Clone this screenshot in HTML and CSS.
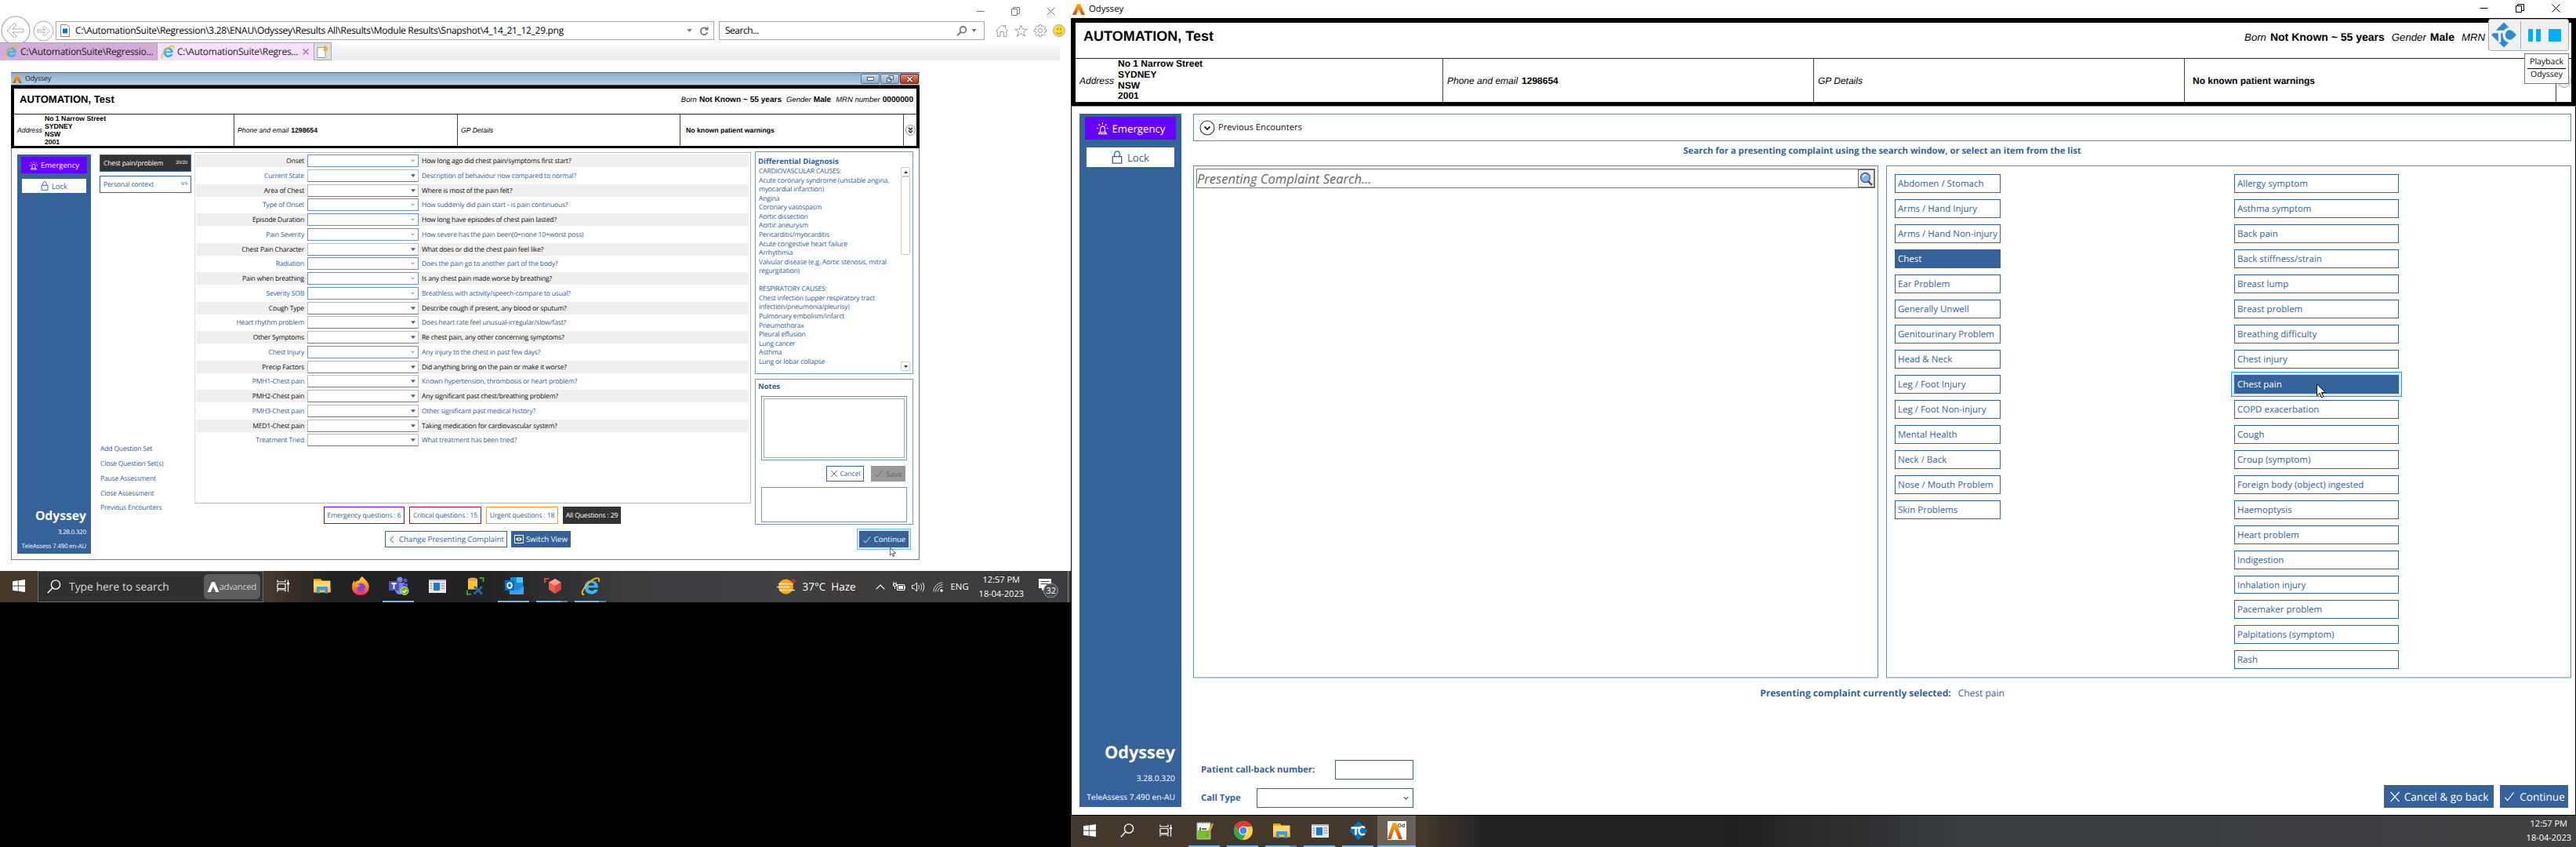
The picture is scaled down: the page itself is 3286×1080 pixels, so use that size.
FILE: index.html
```html
<!DOCTYPE html>
<html lang="en">
<head>
<meta charset="utf-8">
<title>Odyssey</title>
<link rel="stylesheet" href="styles.css">
</head>
<body>
<svg class="defs" aria-hidden="true">
  <defs>
    <linearGradient id="flame" x1="0" y1="0" x2="0" y2="1"><stop offset="0" stop-color="#ffb400"/><stop offset="1" stop-color="#d9480f"/></linearGradient>
    <linearGradient id="fox" x1="0" y1="0" x2="0" y2="1"><stop offset="0" stop-color="#ffde3b"/><stop offset=".5" stop-color="#ff8a1e"/><stop offset="1" stop-color="#f0246c"/></linearGradient>
  </defs>
  <symbol id="i-logo" viewBox="0 0 16 14"><path fill="url(#flame)" d="M6 0h4l6 14h-4.500L8 6.500 4.500 14H0z"/></symbol>
  <symbol id="i-min" viewBox="0 0 11 11"><path d="M.5 5.500h10" stroke="currentColor" fill="none"/></symbol>
  <symbol id="i-restore" viewBox="0 0 11 11"><path d="M.5 2.500h7v8h-7zM2.500 2.500v-2h8v8h-3" stroke="currentColor" fill="none"/></symbol>
  <symbol id="i-close" viewBox="0 0 11 11"><path d="M.5.500l10 10m0-10l-10 10" stroke="currentColor" fill="none"/></symbol>
  <symbol id="i-ie" viewBox="0 0 24 24"><path d="M20.500 14H9c.3 2.500 2 3.600 4 3.600 1.600 0 2.800-.6 3.500-1.600h4.500c-1.200 3.700-4.200 5.500-8 5.500-5 0-8.500-3.400-8.500-8.500S8 4.700 13 4.700s8 3.500 8 8.300zM9.100 11h7.300c-.2-2-1.600-3-3.600-3s-3.400 1-3.700 3z" fill="#3db2ee"/><path d="M4 21.500C.8 24 .5 19 4.500 13.500 9 7 17 1 21 2.200c1.800.6 1.500 2.800.8 4.300" fill="none" stroke="#f3b91c" stroke-width="1.800"/></symbol>
  <symbol id="i-siren" viewBox="0 0 18 18"><path d="M3 16.500h12M4.500 16.500v-2h9v2M6 14.500V9.500a3 3 0 0 1 6 0v5M9 1v3M3.500 3.500l2 2M14.500 3.500l-2 2M1 9h2.500M14.500 9H17" fill="none" stroke="currentColor" stroke-width="1.200"/></symbol>
  <symbol id="i-lock" viewBox="0 0 14 18"><path d="M1 8h12v9H1zM3.500 8V4.500a3.500 3.500 0 0 1 7 0V8" fill="none" stroke="currentColor" stroke-width="1.400"/></symbol>
  <symbol id="i-check" viewBox="0 0 14 14"><path d="M1 8.500l3.500 4L13 1.500" fill="none" stroke="currentColor" stroke-width="1.200"/></symbol>
  <symbol id="i-x" viewBox="0 0 14 14"><path d="M1.500 1l11 12M12.500 1l-11 12" fill="none" stroke="currentColor" stroke-width="1.200"/></symbol>
  <symbol id="i-win" viewBox="0 0 16 16"><path fill="#fff" d="M0 2.300L6.800 1.300v6.300H0zM7.600 1.200L16 0v7.600H7.600zM0 8.400h6.800v6.300L0 13.700zM7.600 8.400H16V16l-8.400-1.200z"/></symbol>
  <symbol id="i-mag" viewBox="0 0 18 18"><path d="M.8 17.200l6-6.500" stroke="currentColor" stroke-width="1.400" fill="none"/><circle cx="11" cy="6.500" r="5.600" stroke="currentColor" stroke-width="1.400" fill="none"/></symbol>
  <symbol id="i-task" viewBox="0 0 17 16"><path d="M1 .5v2.500h10V.5M1 5.500h10v6H1zM1 15.500V13h10v2.500M14.500.5v2.500M14.500 7v8.500" fill="none" stroke="#fff" stroke-width="1.200"/><path fill="#fff" d="M13 3.500h3v3h-3z"/></symbol>
  <symbol id="i-folder" viewBox="0 0 22 19"><path fill="#e39b08" d="M0 0h9l2 3H0z"/><path fill="#ffd869" d="M0 2.500h21.500V17H0z"/><path fill="#f7c23f" d="M0 12h21.500v5.500H0z"/><path fill="#3c99e0" d="M4 10h14v8.500h-3.500v-4h-7v4H4z"/></symbol>
  <symbol id="i-app" viewBox="0 0 22 17"><path fill="#e9e9e9" d="M0 0h22v17H0z"/><path fill="#b9b9b9" d="M0 0h22v2H0z"/><path fill="#1479d0" d="M6 4h8v10H6z"/><path d="M1.500 5h3m-3 3h3m-3 3h3m11-6h5m-5 3h5m-5 3h5" stroke="#888" stroke-width="1"/></symbol>
  <symbol id="i-cursor" viewBox="0 0 12 19"><path d="M.5.700v15l3.600-3.400 2.400 5.600 2.300-1-2.400-5.400h4.900z" fill="#fff" stroke="#000"/></symbol>
  <symbol id="i-tri" viewBox="0 0 8 5"><path fill="currentColor" d="M0 0h8L4 5z"/></symbol>
  <symbol id="i-chev" viewBox="0 0 8 6"><path d="M1 .8l3 3.400L7 .8" fill="none" stroke="currentColor" stroke-width="1.400"/></symbol>
</svg>

<section class="desk desk-left">
  <div class="ie">
    <div class="ie-caption">
      <svg width="11" height="11"><use href="#i-min"/></svg>
      <svg width="11" height="11"><use href="#i-restore"/></svg>
      <svg width="11" height="11"><use href="#i-close"/></svg>
    </div>
    <div class="ie-nav">
      <svg class="back" width="38" height="38" viewBox="0 0 38 38"><circle cx="19" cy="19" r="18" fill="#fff" stroke="#a9a9a9" stroke-width="1.200"/><path d="M8 19l9.500-9.500 2.500 2.500-5 5h14v4H15l5 5-2.500 2.500z" fill="none" stroke="#a9a9a9"/></svg>
      <svg class="fwd" width="27" height="27" viewBox="0 0 27 27"><circle cx="13.500" cy="13.500" r="12.500" fill="#fff" stroke="#a9a9a9"/><path d="M21 13.500L14.500 7l-2 2 3 3H6v3h9.500l-3 3 2 2z" fill="none" stroke="#a9a9a9"/></svg>
      <div class="address">
        <svg width="12" height="16" viewBox="0 0 12 16"><path d="M.5.500h8l3 3v12H.5z" fill="#fff" stroke="#888"/><path d="M3 5.500h6v6H3z" fill="#1273c4"/></svg>
        <span class="url">C:\AutomationSuite\Regression\3.28\ENAU\Odyssey\Results All\Results\Module Results\Snapshot\4_14_21_12_29.png</span>
        <svg class="caret" width="7" height="4"><use href="#i-tri"/></svg>
        <svg width="12" height="13" viewBox="0 0 12 13"><path d="M9.800 4.200A4.400 4.400 0 1 0 10.500 8" fill="none" stroke="#777" stroke-width="1.800"/><path d="M11.500.5v5H6.500z" fill="#777"/></svg>
      </div>
      <div class="search">
        <span>Search...</span>
        <svg width="14" height="13" viewBox="0 0 14 13"><circle cx="8.500" cy="4.900" r="3.900" fill="none" stroke="#777" stroke-width="1.800"/><path d="M5.800 7.700L1 12.400" stroke="#777" stroke-width="2"/></svg>
        <svg class="caret" width="7" height="4"><use href="#i-tri"/></svg>
      </div>
      <div class="ie-tools">
        <svg width="16" height="16" viewBox="0 0 16 16"><path d="M.7 8L8 .8 10.500 3.200V1.500h2v3.700L15.300 8l-1.500.8v6.700h-3.500V9.500H5.800v6H2.200V8.800z" fill="none" stroke="#9a9a9a"/></svg>
        <svg width="17" height="16" viewBox="0 0 17 16"><path d="M8.500.8l2 5.400h5.900l-4.700 3.500 1.800 5.500-5-3.400-5 3.400 1.800-5.500L.6 6.200h5.900z" fill="none" stroke="#9a9a9a"/></svg>
        <svg width="16" height="16" viewBox="0 0 16 16"><circle cx="8" cy="8" r="2.600" fill="none" stroke="#9a9a9a"/><path d="M6.500.7h3v2l1.500.6 1.500-1.300 2 2L13.200 5.500l.5 1.200h1.800v2.800h-1.800L13 11l1.500 1.500-2 2L11 13l-1.500.6v1.800h-3v-1.800L5 13l-1.500 1.500-2-2L3 11l-.6-1.500H.6V6.700h1.800L3 5.500 1.500 4l2-2L5 3.300l1.500-.6z" fill="none" stroke="#9a9a9a"/></svg>
        <svg width="16" height="16" viewBox="0 0 16 16"><circle cx="8" cy="8" r="7.500" fill="#ffd83e" stroke="#aaa"/><path d="M6 4.500v3M10 4.500v3" stroke="#a8841a" stroke-width="1.300"/><path d="M4.500 10.500c2 2 5 2 7 0" fill="none" stroke="#a8841a" stroke-width="1.200"/></svg>
      </div>
    </div>
    <div class="ie-tabs">
      <div class="tab dim"><svg width="18" height="18"><use href="#i-ie"/></svg><span>C:\AutomationSuite\Regressio...</span></div>
      <div class="tab on"><svg width="18" height="18"><use href="#i-ie"/></svg><span>C:\AutomationSuite\Regres...</span><svg class="tab-x" width="8" height="8" viewBox="0 0 8 8"><path d="M.7.700l6.600 6.600M7.300.700L.7 7.300" stroke="#a08fa3" stroke-width="1.700"/></svg></div>
      <div class="newtab"><svg width="15" height="16" viewBox="0 0 15 16"><path d="M1 2.500h10v13H1z" fill="#fff" stroke="#999"/><path d="M11 0l1 2.500 2.500-1L13.500 4l1.500 1-2 .5.500 2.500-2.500-1.500L9 8V5.500L7.500 4.500 9.500 4 9 1.500z" fill="#f2a52c"/></svg></div>
    </div>

    <div class="shot">
      <div class="aero">
        <svg width="12" height="10"><use href="#i-logo"/></svg><span>Odyssey</span>
        <div class="aero-btns">
          <i><svg width="9" height="5" viewBox="0 0 9 5"><path d="M.5.500h8v4h-8z" fill="#fff" stroke="#556"/></svg></i>
          <i><svg width="9" height="9" viewBox="0 0 9 9"><path d="M3 .5h5.500v5H3zM.5 3.500h5v5h-5z" fill="#dde8f2" stroke="#556"/></svg></i>
          <i class="red"><svg width="9" height="8" viewBox="0 0 9 8"><path d="M1 .8l7 6.400M8 .8L1 7.200" stroke="#433" stroke-width="3"/><path d="M1.300 1l6.400 6M7.700 1L1.300 7" stroke="#fff" stroke-width="1.700"/></svg></i>
        </div>
      </div>
      <header class="patient small">
        <div class="p-top">
          <h1>AUTOMATION, Test</h1>
          <p><em>Born</em><b class="dob">Not Known ~ 55 years</b><em class="gen">Gender</em><b>Male</b><em class="mrn">MRN number</em><b>0000000</b></p>
        </div>
        <div class="p-grid">
          <div><em>Address</em><b class="addr">No 1 Narrow Street<br>SYDNEY<br>NSW<br>2001</b></div>
          <div><em>Phone and email</em><b>1298654</b></div>
          <div><em>GP Details</em></div>
          <div class="warn"><b>No known patient warnings</b></div>
          <div class="more"><svg width="13" height="14" viewBox="0 0 13 14"><ellipse cx="6.500" cy="7" rx="6" ry="6.500" fill="#eee" stroke="#999"/><path d="M4 4l2.500 2.500L9 4M4 7.500L6.500 10 9 7.500" fill="none" stroke="#222" stroke-width="1.300"/></svg></div>
        </div>
      </header>
      <div class="shot-body">
        <aside class="side side-s">
          <div class="emg"><svg width="12" height="12"><use href="#i-siren"/></svg><span>Emergency</span></div>
          <div class="lock"><svg width="10" height="12"><use href="#i-lock"/></svg><span>Lock</span></div>
          <strong>Odyssey</strong><small>3.28.0.320</small><small>TeleAssess 7.490 en-AU</small>
        </aside>
        <nav class="sets">
          <div class="set on"><span>Chest pain/problem</span><sup>20/20</sup></div>
          <div class="set"><span>Personal context</span><sup>9/9</sup></div>
          <ul><li>Add Question Set</li><li>Close Question Set(s)</li><li>Pause Assessment</li><li>Close Assessment</li><li>Previous Encounters</li></ul>
        </nav>
        <main class="quest">
          <div class="qpanel">
            <div class="q"><label>Onset</label><i class="sel blue"><svg width="5" height="4"><use href="#i-chev"/></svg></i><span>How long ago did chest pain/symptoms first start?</span></div>
            <div class="q"><label>Current State</label><i class="sel"><svg width="6" height="4"><use href="#i-tri"/></svg></i><span>Description of behaviour now compared to normal?</span></div>
            <div class="q"><label>Area of Chest</label><i class="sel"><svg width="6" height="4"><use href="#i-tri"/></svg></i><span>Where is most of the pain felt?</span></div>
            <div class="q"><label>Type of Onset</label><i class="sel blue"><svg width="5" height="4"><use href="#i-chev"/></svg></i><span>How suddenly did pain start - is pain continuous?</span></div>
            <div class="q"><label>Episode Duration</label><i class="sel blue"><svg width="5" height="4"><use href="#i-chev"/></svg></i><span>How long have episodes of chest pain lasted?</span></div>
            <div class="q"><label>Pain Severity</label><i class="sel blue"><svg width="5" height="4"><use href="#i-chev"/></svg></i><span>How severe has the pain been(0=none 10=worst poss)</span></div>
            <div class="q"><label>Chest Pain Character</label><i class="sel"><svg width="6" height="4"><use href="#i-tri"/></svg></i><span>What does or did the chest pain feel like?</span></div>
            <div class="q"><label>Radiation</label><i class="sel blue"><svg width="5" height="4"><use href="#i-chev"/></svg></i><span>Does the pain go to another part of the body?</span></div>
            <div class="q"><label>Pain when breathing</label><i class="sel blue"><svg width="5" height="4"><use href="#i-chev"/></svg></i><span>Is any chest pain made worse by breathing?</span></div>
            <div class="q"><label>Severity SOB</label><i class="sel blue"><svg width="5" height="4"><use href="#i-chev"/></svg></i><span>Breathless with activity/speech-compare to usual?</span></div>
            <div class="q"><label>Cough Type</label><i class="sel"><svg width="6" height="4"><use href="#i-tri"/></svg></i><span>Describe cough if present, any blood or sputum?</span></div>
            <div class="q"><label>Heart rhythm problem</label><i class="sel"><svg width="6" height="4"><use href="#i-tri"/></svg></i><span>Does heart rate feel unusual-irregular/slow/fast?</span></div>
            <div class="q"><label>Other Symptoms</label><i class="sel"><svg width="6" height="4"><use href="#i-tri"/></svg></i><span>Re chest pain, any other concerning symptoms?</span></div>
            <div class="q"><label>Chest Injury</label><i class="sel blue"><svg width="5" height="4"><use href="#i-chev"/></svg></i><span>Any injury to the chest in past few days?</span></div>
            <div class="q"><label>Precip Factors</label><i class="sel"><svg width="6" height="4"><use href="#i-tri"/></svg></i><span>Did anything bring on the pain or make it worse?</span></div>
            <div class="q"><label>PMH1-Chest pain</label><i class="sel"><svg width="6" height="4"><use href="#i-tri"/></svg></i><span>Known hypertension, thrombosis or heart problem?</span></div>
            <div class="q"><label>PMH2-Chest pain</label><i class="sel"><svg width="6" height="4"><use href="#i-tri"/></svg></i><span>Any significant past chest/breathing problem?</span></div>
            <div class="q"><label>PMH3-Chest pain</label><i class="sel"><svg width="6" height="4"><use href="#i-tri"/></svg></i><span>Other significant past medical history?</span></div>
            <div class="q"><label>MED1-Chest pain</label><i class="sel"><svg width="6" height="4"><use href="#i-tri"/></svg></i><span>Taking medication for cardiovascular system?</span></div>
            <div class="q"><label>Treatment Tried</label><i class="sel"><svg width="6" height="4"><use href="#i-tri"/></svg></i><span>What treatment has been tried?</span></div>
          </div>
          <div class="badges">
            <span class="b-em">Emergency questions : 6</span><span class="b-cr">Critical questions : 15</span><span class="b-ur">Urgent questions : 18</span><span class="b-all">All Questions : 29</span>
          </div>
          <div class="qbtns">
            <div class="btn-o"><svg width="6" height="10" viewBox="0 0 6 10"><path d="M5.200.500L1 5l4.200 4.500" fill="none" stroke="currentColor"/></svg><span>Change Presenting Complaint</span></div>
            <div class="btn-f"><svg width="12" height="11" viewBox="0 0 12 11"><path d="M.5.500h11v10H.5z" fill="none" stroke="#fff"/><path d="M2 5.500c2.500-3 5.500-3 8 0-2.500 3-5.500 3-8 0z" fill="#fff"/><circle cx="6" cy="5.500" r="1.200" fill="#346299"/></svg><span>Switch View</span></div>
          </div>
        </main>
        <div class="info">
          <section class="diag">
            <h2>Differential Diagnosis</h2>
            <div class="dx">
              <p>CARDIOVASCULAR CAUSES:<br>Acute coronary syndrome (unstable angina,<br>myocardial infarction)<br>Angina<br>Coronary vasospasm<br>Aortic dissection<br>Aortic aneurysm<br>Pericarditis/myocarditis<br>Acute congestive heart failure<br>Arrhythmia<br>Valvular disease (e.g. Aortic stenosis, mitral<br>regurgitation)<br><br>RESPIRATORY CAUSES:<br>Chest infection (upper respiratory tract<br>infection/pneumonia/pleurisy)<br>Pulmonary embolism/infarct<br>Pneumothorax<br>Pleural effusion<br>Lung cancer<br>Asthma<br>Lung or lobar collapse</p>
              <div class="scroll"><i><svg width="5" height="3" viewBox="0 0 5 3"><path d="M0 3h5L2.500 0z" fill="#333"/></svg></i><b></b><i><svg width="5" height="3"><use href="#i-tri"/></svg></i></div>
            </div>
          </section>
          <section class="notes">
            <h2>Notes</h2>
            <div class="area"><div></div></div>
            <div class="nbtns"><div class="cancel"><svg width="10" height="10"><use href="#i-x"/></svg><span>Cancel</span></div><div class="save"><svg width="12" height="10"><use href="#i-check"/></svg><span>Save</span></div></div>
            <div class="memo"></div>
          </section>
          <div class="cont"><svg width="12" height="10"><use href="#i-check"/></svg><span>Continue</span><svg class="cur" width="8" height="14"><use href="#i-cursor"/></svg></div>
        </div>
      </div>
    </div>
  </div>
  <footer class="bar">
    <div class="slot start"><svg width="16" height="16"><use href="#i-win"/></svg></div>
    <div class="tsearch"><svg width="18" height="18"><use href="#i-mag"/></svg><span>Type here to search</span>
      <div class="adv"><svg width="16" height="13" viewBox="0 0 16 14"><path fill="#fff" d="M6 0h4l6 14h-4.500L8 6.500 4.500 14H0z"/></svg><span>advanced</span></div></div>
    <div class="slot tv"><svg width="17" height="16"><use href="#i-task"/></svg></div>
    <div class="slot"><svg width="22" height="19"><use href="#i-folder"/></svg></div>
    <div class="slot"><svg width="24" height="24" viewBox="0 0 24 24"><path d="M14 0c1.500 2 3 3 5 5 3 3 4.500 7 3.500 11-1.200 5-5.500 8-10.500 8C5.500 24 1 19.500 1 13.500 1 9.500 2.500 7 4 5l.5 3C6 6 8 5 10 5.500c1-3 2-4 4-5.500z" fill="url(#fox)"/><circle cx="12.500" cy="14" r="5.500" fill="#8246d8"/><path d="M5 11c3-1.500 5-.5 6.500 1-2 0-2 1.500-4 2.500z" fill="#ff9a1f"/></svg></div>
    <div class="slot run"><svg width="26" height="24" viewBox="0 0 26 24"><circle cx="14" cy="4" r="3.600" fill="#7b83eb"/><circle cx="21" cy="5" r="2.600" fill="#5059c9"/><path d="M8 8h12v9a6 6 0 0 1-12 0z" fill="#7b83eb"/><path d="M18 9h6v7c0 3-3 4.500-6 3.500z" fill="#5059c9"/><path d="M0 6h13v12H0z" fill="#4b53bc"/><path d="M3.500 9h6M6.500 9v7" stroke="#fff" stroke-width="1.800"/><circle cx="20" cy="18.500" r="5" fill="#6fb516" stroke="#e8f5d8" stroke-width=".8"/><path d="M17.500 18.500l2 2 3-3.500" fill="none" stroke="#fff" stroke-width="1.500"/></svg></div>
    <div class="slot"><svg width="22" height="17"><use href="#i-app"/></svg></div>
    <div class="slot"><svg width="23" height="23" viewBox="0 0 23 23"><path d="M2 2.500h12v13H2z" fill="#f5c431"/><ellipse cx="8" cy="2.800" rx="6" ry="2.300" fill="#dba765"/><path d="M16.500 1h5v5M.8 16.500v5.200H6" fill="none" stroke="#3c9a3c" stroke-width="2"/><path d="M10 12l10 9.500M20 12L9.500 21.500" stroke="#1d6cb3" stroke-width="2.600"/></svg></div>
    <div class="slot run"><svg width="24" height="22" viewBox="0 0 24 22"><path d="M7 0h16v14H7z" fill="#1a8ad6"/><path d="M15 0h8v7h-8z" fill="#4fc3f7"/><path d="M6 11h18v11H6z" fill="#1c86d6"/><path d="M6 11l9 6.500L24 11v11H6z" fill="#35a5e8"/><path d="M0 4h12v13H0z" fill="#0f6cbd"/><ellipse cx="6" cy="10.500" rx="2.800" ry="3.300" fill="none" stroke="#fff" stroke-width="1.800"/></svg></div>
    <div class="slot run two"><svg width="22" height="20" viewBox="0 0 22 20"><path d="M1 6V1.500L6.500 0" fill="none" stroke="#dc4a38" stroke-width="2.500"/><path d="M14 1l7.500 4.500v9L14 20l-8-5.500v-9z" fill="#e8604c"/><path d="M14 1l7.500 4.500L14 10 6 5.500z" fill="#ff9f8c"/><path d="M14 10l7.500-4.500v9L14 20z" fill="#d24a38"/></svg></div>
    <div class="slot run two"><svg width="25" height="25"><use href="#i-ie"/></svg></div>
    <div class="tray">
      <svg class="haze" width="24" height="20" viewBox="0 0 24 20"><circle cx="11.500" cy="10" r="9.500" fill="#f9a81b"/><circle cx="21" cy="3" r="2.700" fill="#d9281f"/><path d="M2 6.500h19M0 10.500h16M3 14.500h20" stroke="#ffe7a3" stroke-width="1.700"/></svg>
      <span class="temp">37°C&nbsp; Haze</span>
      <svg class="up" width="12" height="7" viewBox="0 0 12 7"><path d="M.6 6.400L6 1l5.400 5.400" fill="none" stroke="#fff" stroke-width="1.200"/></svg>
      <svg class="bat" width="16" height="12" viewBox="0 0 16 12"><path d="M5.500 3.500h9v7h-9zM1 0v2M4 0v2M.5 2.500h4v2.500h-4zM2.500 5v4" fill="none" stroke="#fff"/><path d="M7 5h6v4H7zM15 5.500h1v3h-1z" fill="#fff"/></svg>
      <svg class="vol" width="17" height="13" viewBox="0 0 17 13"><path d="M.5 4.500H3L6.500 1v11L3 8.500H.5zM8.500 4c1.300 1.500 1.300 3.500 0 5M11 2.300c2.200 2.600 2.200 5.800 0 8.400M13.500.7c3 3.500 3 8.100 0 11.600" fill="none" stroke="#fff"/></svg>
      <svg class="wifi" width="13" height="13" viewBox="0 0 13 13"><path d="M.8 12.500A11.700 11.700 0 0 1 12.500.8M3.500 12.500a9 9 0 0 1 9-9M6.300 12.500a6.200 6.200 0 0 1 6.200-6.200" fill="none" stroke="#ccc"/><circle cx="11" cy="11" r="1.700" fill="#fff"/></svg>
      <span class="eng">ENG</span>
      <span class="clock">12:57 PM<br>18-04-2023</span>
      <svg class="notif" width="27" height="25" viewBox="0 0 27 25"><path d="M1 1h16v12H9l-4 3.500V13H1z" fill="#fff"/><path d="M3.500 4.500h11M3.500 7.500h11" stroke="#444"/><circle cx="16.500" cy="16" r="9" fill="#4a4c4f" stroke="#9a9a9a"/><text x="10.500" y="20.300" class="num">32</text></svg>
    </div>
  </footer>
</section>

<section class="desk desk-right">
  <div class="win-title">
    <svg width="16" height="14"><use href="#i-logo"/></svg><span>Odyssey</span>
    <div class="wbtns">
      <svg width="11" height="11"><use href="#i-min"/></svg>
      <svg width="11" height="11"><use href="#i-restore"/></svg>
      <svg width="11" height="11"><use href="#i-close"/></svg>
    </div>
  </div>
  <header class="patient large">
    <div class="p-top">
      <h1>AUTOMATION, Test</h1>
      <p><em>Born</em><b class="dob">Not Known ~ 55 years</b><em class="gen">Gender</em><b>Male</b><em class="mrn">MRN n</em></p>
    </div>
    <div class="p-grid">
      <div><em>Address</em><b class="addr">No 1 Narrow Street<br>SYDNEY<br>NSW<br>2001</b></div>
      <div><em>Phone and email</em><b>1298654</b></div>
      <div><em>GP Details</em></div>
      <div class="warn"><b>No known patient warnings</b></div>
      <div class="more"><svg width="18" height="20" viewBox="0 0 18 20"><circle cx="9" cy="10" r="8.500" fill="#eee" stroke="#aaa"/></svg></div>
    </div>
  </header>
  <div class="win-body">
    <aside class="side side-l">
      <div class="emg"><svg width="17" height="17"><use href="#i-siren"/></svg><span>Emergency</span></div>
      <div class="lock"><svg width="14" height="17"><use href="#i-lock"/></svg><span>Lock</span></div>
      <strong>Odyssey</strong><small>3.28.0.320</small><small>TeleAssess 7.490 en-AU</small>
    </aside>
    <main class="pc">
      <div class="prev"><svg width="20" height="20" viewBox="0 0 20 20"><circle cx="10" cy="10" r="9" fill="#fff" stroke="#333" stroke-width="1.100"/><path d="M6.500 8.500L10 12l3.500-3.500" fill="none" stroke="#222" stroke-width="1.900"/></svg><span>Previous Encounters</span></div>
      <p class="hint"><span>Search for a presenting complaint using the search window, or select an item from the list</span></p>
      <div class="cols">
        <section class="find">
          <div class="field"><em>Presenting Complaint Search...</em><i><svg width="17" height="18" viewBox="0 0 17 18"><path d="M11 12l5 5" stroke="#555" stroke-width="2.500"/><circle cx="7.500" cy="7.500" r="6" fill="#7db9f0" stroke="#557" stroke-width="1.300"/><path d="M4.500 7a3.500 3.500 0 0 1 4-3" stroke="#fff" stroke-width="1.400" fill="none"/></svg></i></div>
        </section>
        <section class="pick">
          <ul class="cat"><li>Abdomen / Stomach</li><li>Arms / Hand Injury</li><li>Arms / Hand Non-injury</li><li class="sel-on">Chest</li><li>Ear Problem</li><li>Generally Unwell</li><li>Genitourinary Problem</li><li>Head &amp; Neck</li><li>Leg / Foot Injury</li><li>Leg / Foot Non-injury</li><li>Mental Health</li><li>Neck / Back</li><li>Nose / Mouth Problem</li><li>Skin Problems</li></ul>
          <ul class="sym"><li>Allergy symptom</li><li>Asthma symptom</li><li>Back pain</li><li>Back stiffness/strain</li><li>Breast lump</li><li>Breast problem</li><li>Breathing difficulty</li><li>Chest injury</li><li class="sel-on focus">Chest pain<svg class="cur" width="12" height="19"><use href="#i-cursor"/></svg></li><li>COPD exacerbation</li><li>Cough</li><li>Croup (symptom)</li><li>Foreign body (object) ingested</li><li>Haemoptysis</li><li>Heart problem</li><li>Indigestion</li><li class="short">Inhalation injury</li><li>Pacemaker problem</li><li>Palpitations (symptom)</li><li>Rash</li></ul>
        </section>
      </div>
      <p class="chosen"><b>Presenting complaint currently selected:</b><span>Chest pain</span></p>
      <div class="foot">
        <div class="form">
          <div><b>Patient call-back number:</b><i class="num-in"></i></div>
          <div><b>Call Type</b><i class="type-in"><svg width="7" height="6"><use href="#i-chev"/></svg></i></div>
        </div>
        <div class="actions"><div class="go-back"><svg width="14" height="14"><use href="#i-x"/></svg><span>Cancel &amp; go back</span></div><div class="go"><svg width="16" height="13"><use href="#i-check"/></svg><span>Continue</span></div></div>
      </div>
    </main>
  </div>
  <footer class="bar">
    <div class="slot start"><svg width="16" height="16"><use href="#i-win"/></svg></div>
    <div class="slot start"><svg class="wh" width="18" height="18"><use href="#i-mag"/></svg></div>
    <div class="slot start2"><svg width="17" height="16"><use href="#i-task"/></svg></div>
    <div class="slot run"><svg width="22" height="24" viewBox="0 0 22 24"><path d="M1 2h17v21H1z" fill="#eef3ec" stroke="#aaa"/><path d="M1.500 12h16v10.500h-16z" fill="#72c02c"/><path d="M5 8v4M7 10h6" stroke="#333" stroke-width="1.500"/><path d="M20.500 2L14 16l-1 3 3-2 6-13z" fill="#f0b429" stroke="#8a5a10" stroke-width=".6"/><path d="M2 2.500h15" stroke="#999" stroke-dasharray="1.500 1.500"/></svg></div>
    <div class="slot run"><svg width="24" height="24" viewBox="0 0 24 24"><circle cx="12" cy="12" r="12" fill="#ffcd40"/><path d="M12 12L1.600 6A12 12 0 0 1 22.400 6H12z" fill="#e33b2e"/><path d="M12 12L6.800 15 1.600 6A12 12 0 0 0 11 24l5-9z" fill="#2da94f"/><path d="M1.600 6L7 15l5-8h10.400A12 12 0 0 0 1.600 6z" fill="#e33b2e"/><circle cx="12" cy="12" r="5.600" fill="#fff"/><circle cx="12" cy="12" r="4.500" fill="#4285f4"/></svg></div>
    <div class="slot run two"><svg width="22" height="19"><use href="#i-folder"/></svg></div>
    <div class="slot run"><svg width="22" height="17"><use href="#i-app"/></svg></div>
    <div class="slot run"><svg width="24" height="24" viewBox="0 0 24 24"><path d="M12 0l12 12-12 12L0 12z" fill="#0c74c0"/><path d="M2.500 8.500H14M8.500 9v8.500" stroke="#fff" stroke-width="2.600" fill="none"/><path d="M20 8.500a4.500 5 0 1 0 0 7.500" stroke="#fff" stroke-width="2.400" fill="none"/></svg></div>
    <div class="slot run act"><svg width="24" height="24" viewBox="0 0 24 24"><path d="M0 0h24v24H0z" fill="#fff"/><path fill="url(#flame)" d="M6.500 2h4.500l8 21h-5L8.700 9.500 4.500 23H0z"/><text x="12.500" y="8" class="od">Od</text></svg></div>
    <span class="clock">12:57 PM<br>18-04-2023</span>
  </footer>
  <div class="player">
    <svg width="32" height="33" viewBox="0 0 32 33"><path d="M16 .5L32 16.500 16 32.500 0 16.500z" fill="#2b8bcf"/><path d="M0 12.500h17M10.500 13v13" stroke="#f0f0f0" stroke-width="3.400" fill="none"/><path d="M29 11a7.500 8 0 1 0 0 11" stroke="#f0f0f0" stroke-width="3.400" fill="none"/></svg>
    <i class="sep"></i><i class="pause"></i><i class="stop"></i>
  </div>
  <div class="tip"><span>Playback</span><hr><span>Odyssey</span></div>
</section>
</body>
</html>
```
FILE: styles.css
```css
* { box-sizing: border-box; }
body { margin: 0; display: flex; width: 3286px; height: 1080px; overflow: hidden; background: #000; font-family: "Open Sans", "Noto Sans", sans-serif; color: #000; text-rendering: geometricPrecision; }
h1, h2, p, ul { margin: 0; padding: 0; font-size: inherit; font-weight: inherit; }
ul { list-style: none; }
i { font-style: normal; }
svg { display: block; flex: none; }
span, b, em, label, small, strong, h1, h2, li { white-space: nowrap; }
.defs { position: absolute; width: 0; height: 0; }
.desk { height: 1080px; flex: none; display: flex; flex-direction: column; }
.desk-left { width: 1366px; }
.desk-right { width: 1920px; position: relative; }

/* Browser window */
.ie { height: 728px; background: #fff; }
.ie-caption { height: 27px; display: flex; justify-content: flex-end; gap: 34px; padding: 9px 20px 0 0; color: #777; }
.ie-nav { height: 24px; display: flex; align-items: center; }
.back { margin-left: 1px; }
.fwd { margin-left: 3px; }
.address, .search { height: 24px; border: 1px solid #a9a9a9; display: flex; align-items: center; color: #777; }
.address { width: 840px; margin-left: 2px; padding: 0 6px 0 5px; }
.address span, .search span { color: #000; font-size: 12px; letter-spacing: -.3px; line-height: 22px; }
.url { margin-left: 7px; margin-right: auto; }
.address .caret { margin-right: 9px; }
.search { width: 339px; margin-left: 6px; padding: 0 9px 0 7px; }
.search span { margin-right: auto; letter-spacing: -.5px; }
.search .caret { margin-left: 5px; }
.ie-tools { display: flex; gap: 8px; margin-left: 14px; }
.ie-tabs { margin-top: 3px; height: 23px; display: flex; background: linear-gradient(#fff, #ededed 70%); margin-right: 14px; position: relative; font-size: 12px; letter-spacing: -.25px; }
.tab { display: flex; align-items: center; height: 23px; border-top: 1px solid #b9a0bd; border-right: 1px solid #aaa; }
.tab span { line-height: 22px; margin-left: 3px; color: #222; }
.dim { width: 201px; background: #d3acd9; padding-left: 5px; }
.on.tab { width: 200px; background: #f6e0fb; padding-left: 4px; }
.tab-x { margin-left: 6px; }
.newtab { width: 22px; background: #dedede; border: 1px solid #aaa; border-left: 0; padding: 3px 0 0 3px; }

/* Snapshot inside the browser */
.shot { margin: 15px 0 0 14px; width: 1159px; height: 622px; border: 1px solid #777; border-top: 0; }
.aero { margin: 0 -1px; height: 17px; border-top: 1px solid #667; border-bottom: 1px solid #456; background: linear-gradient(#8dadcb, #b6d0ea); display: flex; align-items: center; font-size: 8.800px; letter-spacing: -.2px; padding-left: 2px; }
.aero span { margin-left: 4px; color: #222; line-height: 15px; }
.aero-btns { margin-left: auto; display: flex; gap: 1px; padding-right: 1px; }
.aero-btns i { width: 24px; height: 13px; border: 1px solid #5d7590; border-radius: 2px; display: flex; align-items: center; justify-content: center; background: linear-gradient(#c6d8e9, #8fadc9); }
.aero-btns .red { background: linear-gradient(#e08a78, #b8321d); border-color: #622; }

.patient { font-family: "Liberation Sans", Arial, sans-serif; background: #fff; border: 0 solid #000; }
.patient h1 { font-weight: bold; }
.patient .p-top { display: flex; justify-content: space-between; align-items: center; border-bottom: 1px solid #222; }
.patient .p-top p { display: flex; align-items: center; }
.p-grid { display: grid; }
.p-grid > div { display: flex; align-items: center; border-left: 1px solid #444; }
.p-grid > div:first-child { border-left: 0; }
.p-grid .more { justify-content: center; }
.small { height: 80px; margin: 0 -1px; border-width: 4px 4px 3px 4px; font-size: 8.700px; }
.small .p-top { height: 33px; padding: 0 4px 5px 7px; }
.small h1 { font-size: 13.100px; }
.small .p-top p { padding-top: 2px; font-size: 10.100px; }
.small .p-top em { font-size: 9.500px; }
.small .p-grid { height: 40px; grid-template-columns: 280px 285px 284px 285px 1fr; }
.small .p-grid > div { padding-left: 4px; }
.small .p-grid > .warn { padding-left: 7px; }
.small .p-grid > .more { padding: 0; }
.small .addr { line-height: 10px; margin-left: 3px; }
.small b { margin-left: 3px; }
.small .gen, .small .mrn { margin-left: 6px; }
.small .warn b { margin: 0; }

.shot-body { display: flex; align-items: flex-start; color: #346299; }
.side { background: #346299; display: flex; flex-direction: column; color: #fff; }
.side .emg { background: #60f; display: flex; align-items: center; justify-content: center; }
.side .lock { background: #fff; color: #346299; display: flex; align-items: center; justify-content: center; }
.side strong { margin-top: auto; text-align: right; }
.side small { text-align: right; }
.side-s { width: 94px; height: 509px; margin: 8px 0 0 7px; padding: 3px 5px 0; }
.side-s .emg { height: 21px; width: 84px; font-size: 9.500px; gap: 3px; }
.side-s .lock { height: 18px; width: 82px; margin: 7px 0 0 1px; font-size: 9.500px; gap: 4px; }
.side-s strong { font-size: 15.700px; line-height: 22px; padding-right: 1px; }
.side-s small { font-size: 7.800px; letter-spacing: -.13px; line-height: 17.500px; padding-right: 1px; }
.side-s small:first-of-type { margin-top: 3px; }

.sets { width: 117px; height: 460px; margin: 8px 0 0 11px; display: flex; flex-direction: column; font-size: 8.600px; letter-spacing: -.2px; }
.set { height: 22px; border: 1.500px solid #346299; display: flex; justify-content: space-between; padding: 0 4px; align-items: center; margin-bottom: 5px; }
.set.on { background: #333; color: #fff; }
.set sup { font-size: 6px; line-height: 8px; margin-bottom: 3px; }
.sets ul { margin-top: auto; padding-left: 1px; }
.sets li { line-height: 18.750px; }

.quest { width: 710px; margin: 5px 0 0 4px; }
.qpanel { height: 448px; border: 1px solid #bbb; border-left-color: #ddd; padding: 2px 2px 0 1px; }
.q { height: 16px; margin-bottom: 2.760px; display: flex; align-items: center; font-size: 8.600px; letter-spacing: -.2px; }
.q:nth-child(odd) { background: #efefef; color: #111; }
.q label { width: 138px; text-align: right; margin-right: 4px; line-height: 16px; }
.q span { margin-left: 4px; line-height: 16px; }
.sel { width: 142px; height: 16px; background: #fff; border: 1px solid #bbb; border-bottom-color: #777; color: #346299; display: flex; align-items: center; justify-content: flex-end; padding-right: 3px; }
.sel.blue { border-color: #6d93c4; padding-right: 4px; }
.badges { display: flex; gap: 6px; margin: 4px 0 0 165px; font-size: 8.600px; letter-spacing: -.15px; color: #346299; }
.badges span { height: 22px; border: 1.500px solid #333; display: flex; align-items: center; justify-content: center; }
.badges .b-em { width: 103px; border-color: #60f; }
.badges .b-cr { width: 92px; border-color: #a80f2e; }
.badges .b-ur { width: 92px; border-color: #fd9a35; }
.b-all { width: 74px; background: #333; color: #fff; }
.qbtns { display: flex; gap: 5px; margin: 9px 0 0 243px; font-size: 9.700px; }
.btn-o, .btn-f { height: 21px; border: 1px solid #346299; display: flex; align-items: center; }
.btn-o { width: 156px; padding-left: 5px; gap: 6px; }
.btn-f { width: 76px; background: #346299; color: #fff; padding-left: 3px; gap: 3px; }

.info { width: 202px; margin: 4px 0 0 5px; display: flex; flex-direction: column; }
.info h2 { font-weight: bold; font-size: 9.500px; line-height: 14px; }
.diag { height: 284px; border: 1px solid #6f97c2; padding: 5px 3px 0 3px; }
.dx { display: flex; justify-content: space-between; font-size: 8.600px; letter-spacing: -.2px; line-height: 11.570px; }
.dx p { white-space: nowrap; margin-left: 1px; }
.scroll { width: 12px; display: flex; flex-direction: column; height: 260px; }
.scroll i { height: 12px; border: 1px solid #ccc; border-radius: 2px; display: flex; align-items: center; justify-content: center; color: #333; }
.scroll b { height: 100px; border: 1px solid #ccc; border-radius: 2px; margin-bottom: auto; }
.notes { height: 186px; margin-top: 6px; border: 1px solid #6f97c2; padding: 2px 7px 0 3px; }
.area { width: 186px; height: 82px; margin: 5px 0 0 4px; border: 1px solid #6f97c2; padding: 2px; }
.area div { height: 76px; border: 1px solid #aaa; }
.nbtns { display: flex; justify-content: flex-end; gap: 9px; margin: 7px 2px 0 0; font-size: 8.600px; letter-spacing: -.1px; }
.cancel, .save { height: 20px; display: flex; align-items: center; justify-content: center; gap: 3px; }
.cancel { width: 48px; border: 1px solid #346299; }
.save { width: 44px; background: #999; color: #666; font-size: 9.600px; }
.memo { width: 186px; height: 45px; margin: 7px 0 0 4px; border: 1px solid #6f97c2; }
.cont { position: relative; width: 69px; height: 27px; margin: 5px 3px 0 auto; background: #346299; border: 1px solid #6cc0ee; box-shadow: inset 0 0 0 2px #dfe0fa; color: #fff; display: flex; align-items: center; justify-content: center; gap: 3px; font-size: 9.500px; }
.cur { position: absolute; }
.cont .cur { left: 41px; top: 22px; }

/* Taskbars */
.bar { height: 40px; flex: none; display: flex; align-items: stretch; color: #fff; }
.desk-left .bar { background: linear-gradient(90deg, #43382b 0, #43382b 345px, #222224 420px, #232325 620px, #3a3c3e 800px, #404246 1000px, #3f3c3b 1060px, #3b3d40 1366px); }
.desk-right .bar { background: linear-gradient(90deg, #43382b 0, #43382b 450px, #222224 530px, #202122 850px, #3a3d40 1150px, #3a3d40 1400px, #424244 1920px); }
.slot { width: 49px; display: flex; align-items: center; justify-content: center; border-bottom: 2px solid transparent; position: relative; flex: none; }
.slot.start { width: 48px; }
.slot.start2 { width: 50px; }
.slot.tv { width: 50px; }
.slot.run::after { content: ""; position: absolute; left: 4px; right: 5px; bottom: -2px; height: 2px; background: #76b9ed; }
.slot.two::after { background: linear-gradient(90deg, #76b9ed 31px, #5587b0 31px); }
.slot.act { background: #6b6159; }
.slot.act::after { left: 0; right: 0; }
.tsearch { width: 288px; height: 40px; background: #303030; border: 1px solid #6b6b6b; display: flex; align-items: center; padding-left: 11px; }
.tsearch > span { font-size: 13.900px; margin-left: 10px; color: #d5d5d5; }
.adv { width: 72px; height: 32px; margin: 0 3px 0 auto; background: #5d5d5d; border-radius: 6px; display: flex; align-items: center; padding-left: 4px; }
.adv span { font-size: 10.900px; font-weight: 300; }
.tray { margin-left: auto; display: flex; align-items: center; font-size: 13.500px; border-right: 1px solid #888; margin-right: 3px; }
.tray .temp { margin: 0 25px 0 8px; }
.up { margin-right: 10px; }
.bat { margin-right: 8px; }
.vol { margin-right: 10px; }
.eng { margin: 0 13px 0 10px; font-size: 11.300px; }
.clock { font-size: 11px; line-height: 18px; text-align: center; }
.notif { margin: 2px 11px 0 18px; }
.num { font: 11px "Open Sans", sans-serif; fill: #fff; }
.desk-right .clock { margin: 2px 6px 0 auto; }
.od { font: bold 7px "Open Sans", sans-serif; fill: #555; }
.tray .clock { padding-top: 2px; }

/* Live window */
.win-title { height: 23px; background: #fff; display: flex; align-items: center; padding-left: 2px; font-size: 11.300px; }
.win-title span { margin-left: 5px; }
.wbtns { margin-left: auto; display: flex; gap: 35px; padding-right: 20px; margin-top: -2px; }
.large { height: 112px; border-width: 6px 6px 5px 6px; font-size: 12px; }
.large .p-top { height: 46px; padding: 0 5px 11px 10px; }
.large h1 { font-size: 18px; }
.large .p-top p { font-size: 14px; padding-top: 2px; margin-right: 94px; }
.large .p-top em { font-size: 13.200px; }
.large .p-grid { height: 55px; grid-template-columns: 468px 473px 473px 474px 1fr; }
.large .p-grid > div { padding-left: 5px; }
.large .p-grid > .warn { padding-left: 10px; }
.large .p-grid > .more { padding: 0; }
.large .addr { line-height: 13.670px; margin-left: 5px; }
.large b { margin-left: 5px; }
.large .gen, .large .mrn { margin-left: 9px; }
.large .warn b { margin: 0; }
.win-body { height: 905px; background: #fff; border: 1px solid #000; border-top: 1px solid #999; display: flex; align-items: flex-start; color: #346299; }
.side-l { width: 130px; height: 884px; margin: 9px 0 0 10px; padding: 4px 8px 0 7px; }
.side-l .emg { width: 116px; height: 29px; font-size: 13.200px; gap: 4px; }
.side-l .lock { width: 112px; height: 25px; margin: 10px 0 0 2px; font-size: 13.200px; gap: 6px; }
.side-l strong { font-size: 21.700px; line-height: 30px; }
.side-l small { font-size: 10.300px; line-height: 24px; }
.side-l small:first-of-type { margin-top: 6px; }
.pc { width: 1758px; height: 895px; margin: 9px 0 0 15px; display: flex; flex-direction: column; }
.prev { height: 35px; border: 1px solid #5f88ba; display: flex; align-items: center; padding-left: 7px; gap: 4px; color: #111; font-size: 11.200px; }
.hint { height: 31px; font-weight: bold; text-align: center; line-height: 26px; font-size: 11.300px; }
.cols { display: flex; gap: 10px; }
.find, .pick { width: 874px; height: 654px; border: 1px solid #5f88ba; border-bottom: 2px solid #b0c4de; }
.find { padding: 3px; }
.field { height: 25px; border: 1px solid #777; display: flex; justify-content: space-between; align-items: center; }
.field em { font-size: 16.500px; color: #666; }
.field i { width: 21px; height: 23px; border: 1px solid #667; background: #eee; display: flex; align-items: center; justify-content: center; }
.pick { padding: 10px 10px 0; display: flex; justify-content: space-between; font-size: 11.500px; }
.pick li { height: 24px; margin-bottom: 8px; border: 1px solid #346299; padding: 2px 3px 0; line-height: 20px; position: relative; }
.cat { width: 135px; }
.sym { width: 210px; margin-right: 209px; }
.pick .sel-on { background: #346299; color: #fff; }
.pick .focus { box-shadow: 0 0 0 3px #dfe4f7, 0 0 0 4px #1ba1e2; }
.pick .short { height: 23px; }
.focus .cur { left: 104px; top: 10px; z-index: 2; }
.chosen { height: 38px; line-height: 38px; display: flex; justify-content: center; gap: 9px; font-size: 12px; }
.foot { margin-top: auto; display: flex; justify-content: space-between; align-items: flex-end; padding: 0 4px 10px 10px; font-size: 11.300px; }
.form { width: 271px; display: flex; flex-direction: column; gap: 11px; }
.form div { display: flex; justify-content: space-between; align-items: center; }
.form i { height: 25px; border: 1px solid #346299; }
.num-in { width: 100px; }
.type-in { width: 200px; display: flex; align-items: center; justify-content: flex-end; padding-right: 5px; }
.actions { display: flex; gap: 8px; color: #fff; font-size: 13.600px; }
.actions > div { height: 29px; background: #346299; display: flex; align-items: center; justify-content: center; gap: 5px; }
.go-back { width: 140px; }
.go { width: 87px; }

/* Playback toolbar */
.player { position: absolute; left: 1808px; top: 24px; width: 103px; height: 41px; background: #f0f0f0; border: 1px solid #aaa; border-radius: 3px; display: flex; align-items: center; padding-left: 3px; }
.sep { width: 1px; height: 35px; background: #aaa; margin: 0 9px 0 5px; }
.pause { width: 16px; height: 16px; border: solid #00aeff; border-width: 0 6px; }
.stop { width: 16px; height: 16px; background: #00aeff; margin-left: 10px; }
.tip { position: absolute; left: 1854px; top: 68px; width: 57px; height: 39px; background: #fff; border: 1px solid #777; padding: 3px; font-size: 10.500px; line-height: 15px; text-align: center; }
.tip span { display: block; }
.tip hr { margin: 0; border: 0; border-top: 1px solid #000; }
```
